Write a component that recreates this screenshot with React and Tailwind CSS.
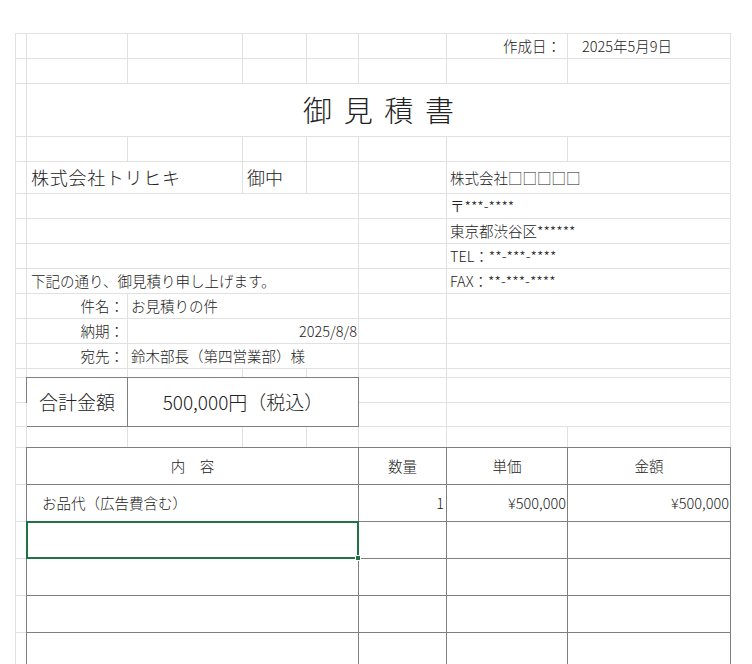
import React from "react";

const L = "border-r border-b border-[#e1e1e1]";
const D = "border-r border-b border-[#7f7f7f]";

function Cell({ className = "", children }) {
  return <div className={`flex items-center whitespace-nowrap overflow-visible ${className}`}>{children}</div>;
}

function Blank({ n }) {
  return Array.from({ length: n }).map((_, i) => <Cell key={i} className={L} />);
}

export default function App() {
  const right = ["〒***-****", "東京都渋谷区******", "TEL：**-***-****"];
  return (
    <div className="w-[752px] h-[664px] overflow-hidden bg-white text-[14px] text-[#222] font-light" style={{ fontFamily: '"Noto Sans CJK JP", "Noto Sans", sans-serif' }}>
      <div className="ml-[15px] mt-[33px] grid w-max border-t border-l border-[#e1e1e1] grid-cols-[11px_101px_115px_64px_52px_88px_121px_163px] grid-rows-[25px_25px_53px_25px_32px_25px_25px_25px_25px_25px_25px_25px_9px_25px_24px_21px_37px_37px_37px_37px_37px_37px]">
        {/* R1 */}
        <Blank n={6} />
        <Cell className={`${L} justify-end pr-[6px] text-[14.5px]`}>作成日：</Cell>
        <Cell className={`${L} pl-[14px] text-[14.5px]`}>2025年5月9日</Cell>
        {/* R2 */}
        <Blank n={8} />
        {/* R3 */}
        <Cell className={L} />
        <Cell className={`${L} col-span-7 justify-center text-[29px] tracking-[0.4em] pl-[0.4em]`}>御見積書</Cell>
        {/* R4 */}
        <Blank n={8} />
        {/* R5 */}
        <Cell className={L} />
        <Cell className={`${L} col-span-2 pl-[4px] text-[18px] tracking-[0.04em]`}>株式会社トリヒキ</Cell>
        <Cell className={`${L} pl-[4px] text-[18px]`}>御中</Cell>
        <Blank n={2} />
        <Cell className={`${L} col-span-2 pl-[3px] text-[14.5px]`}>株式会社□□□□□</Cell>
        {/* R6-8 */}
        {right.map((t) => (
          <React.Fragment key={t}>
            <Cell className={L} />
            <Cell className={`${L} col-span-4`} />
            <Cell className={L} />
            <Cell className={`${L} col-span-2 pl-[3px] text-[14.5px]`}>{t}</Cell>
          </React.Fragment>
        ))}
        {/* R9 */}
        <Cell className={L} />
        <Cell className={`${L} col-span-4 pl-[4px] text-[14.5px]`}>下記の通り、御見積り申し上げます。</Cell>
        <Cell className={L} />
        <Cell className={`${L} col-span-2 pl-[3px] text-[14.5px]`}>FAX：**-***-****</Cell>
        {/* R10-12 */}
        {[
          ["件名：", "お見積りの件", false],
          ["納期：", "2025/8/8", true],
          ["宛先：", "鈴木部長（第四営業部）様", false],
        ].map(([a, b, r]) => (
          <React.Fragment key={a}>
            <Cell className={L} />
            <Cell className={`${L} justify-end pr-[3px] text-[14.5px]`}>{a}</Cell>
            <Cell className={`${L} col-span-3 text-[14.5px] ${r ? "justify-end pr-[1px]" : "pl-[3px]"}`}>{b}</Cell>
            <Cell className={L} />
            <Cell className={`${L} col-span-2`} />
          </React.Fragment>
        ))}
        {/* R13 */}
        <Blank n={6} />
        <Cell className={`${L} col-span-2`} />
        {/* R14-15 */}
        <Cell className={L} />
        <Cell className={`${D} row-span-2 border-t border-l -mt-px -ml-px justify-center text-[19px]`}>合計金額</Cell>
        <Cell className={`${D} col-span-3 row-span-2 border-t -mt-px justify-center text-[19px]`}>500,000円（税込）</Cell>
        <Cell className={L} />
        <Cell className={`${L} col-span-2`} />
        <Cell className={L} />
        <Cell className={L} />
        <Cell className={`${L} col-span-2`} />
        {/* R16 */}
        <Blank n={8} />
        {/* R17 header */}
        <Cell className={L} />
        <Cell className={`${D} col-span-4 border-t border-l -mt-px -ml-px justify-center text-[14.5px]`}>内　容</Cell>
        <Cell className={`${D} border-t -mt-px justify-center text-[14.5px]`}>数量</Cell>
        <Cell className={`${D} border-t -mt-px justify-center text-[14.5px]`}>単価</Cell>
        <Cell className={`${D} border-t -mt-px justify-center text-[14.5px]`}>金額</Cell>
        {/* R18 */}
        <Cell className={L} />
        <Cell className={`${D} col-span-4 border-l -ml-px pl-[15px] text-[14.5px]`}>お品代（広告費含む）</Cell>
        <Cell className={`${D} justify-end pr-[2px] text-[14.5px]`}>1</Cell>
        <Cell className={`${D} justify-end pr-[1px] text-[14.5px]`}>¥500,000</Cell>
        <Cell className={`${D} justify-end pr-[1px] text-[14.5px]`}>¥500,000</Cell>
        {/* R19 selected */}
        <Cell className={L} />
        <div className="col-span-4 -ml-px -mt-px relative border-2 border-[#217346]">
          <div className="absolute -right-[4px] -bottom-[4px] w-[6px] h-[6px] bg-[#217346] border border-white" />
        </div>
        <Cell className={D} />
        <Cell className={D} />
        <Cell className={D} />
        {/* R20-22 */}
        {[0, 1, 2].map((i) => (
          <React.Fragment key={i}>
            <Cell className={L} />
            <Cell className={`${D} col-span-4 border-l -ml-px`} />
            <Cell className={D} />
            <Cell className={D} />
            <Cell className={D} />
          </React.Fragment>
        ))}
      </div>
    </div>
  );
}
